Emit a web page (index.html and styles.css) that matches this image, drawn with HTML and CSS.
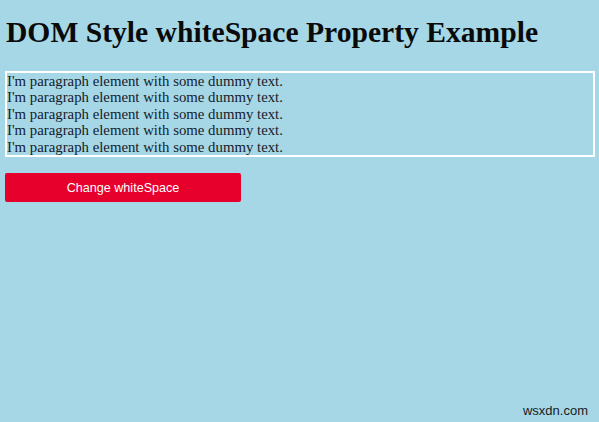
FILE: index.html
```html
<!DOCTYPE html>
<html>
<head>
<meta charset="utf-8">
<link rel="stylesheet" href="styles.css">
</head>
<body>
<h1 class="title">DOM Style whiteSpace Property Example</h1>
<div class="box">
<p class="line">I'm paragraph element with some dummy text.</p>
<p class="line">I'm paragraph element with some dummy text.</p>
<p class="line">I'm paragraph element with some dummy text.</p>
<p class="line">I'm paragraph element with some dummy text.</p>
<p class="line">I'm paragraph element with some dummy text.</p>
</div>
<button class="btn">Change whiteSpace</button>
<div class="mark">wsxdn.com</div>
</body>
</html>
```
FILE: styles.css
```css
html, body {
  margin: 0;
  height: 100%;
}
body {
  background: #a6d7e6;
  padding: 0 4px 0 5px;
  box-sizing: border-box;
  font-family: "Liberation Serif", "Times New Roman", serif;
  position: relative;
  overflow: hidden;
}
.title {
  margin: 0;
  padding-top: 16px;
  font-size: 29.6px;
  line-height: 33px;
  font-weight: bold;
  color: #0a0a0a;
  padding-left: 1px;
}
.box {
  margin-top: 22px;
  border: 2px solid #ffffff;
  padding: 0;
  color: #15202a;
}
.line {
  margin: 0;
  font-size: 14.8px;
  line-height: 16.4px;
  padding-left: 0;
}
.btn {
  display: block;
  margin-top: 16px;
  width: 236px;
  height: 29px;
  background: #e8002d;
  border: none;
  border-radius: 2px;
  color: #ffffff;
  font-family: "Liberation Sans", Arial, sans-serif;
  font-size: 12.6px;
  padding: 0;
}
.mark {
  position: absolute;
  right: 11px;
  bottom: 4px;
  font-family: "Liberation Sans", Arial, sans-serif;
  font-size: 13px;
  color: #1a1a1a;
}
```
